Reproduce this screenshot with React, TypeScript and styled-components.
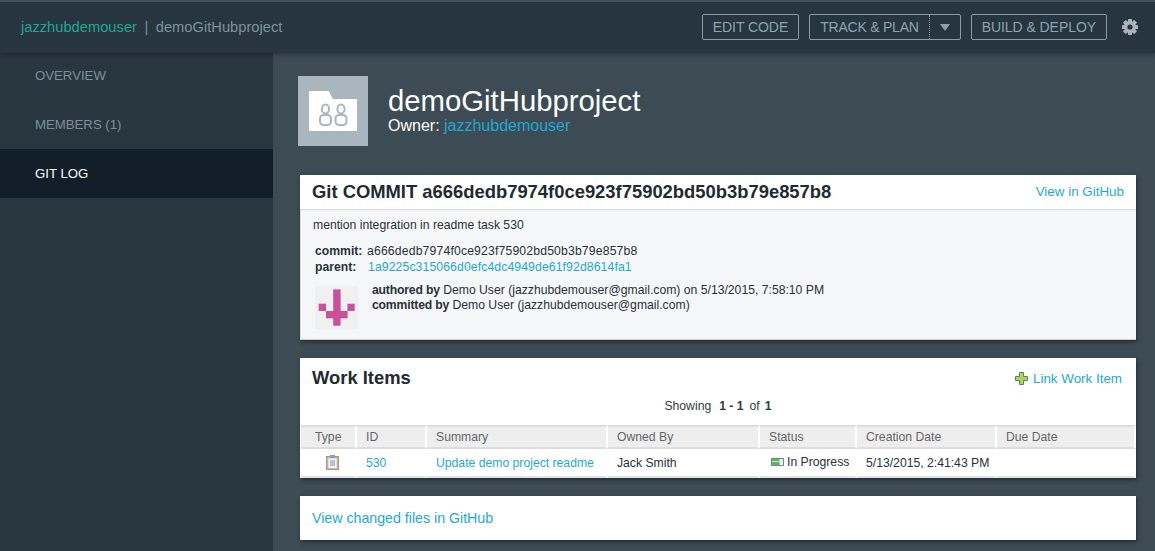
import styled, { createGlobalStyle } from "styled-components";

const GlobalStyle = createGlobalStyle`
    html, body {
        margin: 0;
        padding: 0;
        height: 100%;
        overflow: hidden;
        background: #283640;
        font-family: "Liberation Sans", Arial, sans-serif;
    }
`;

const Page = styled.div`
    display: flex;
    flex-direction: column;
    width: 1155px;
    height: 551px;
    overflow: hidden;
`;

const TopBar = styled.header`
    display: flex;
    align-items: center;
    justify-content: space-between;
    height: 53px;
    flex: none;
    box-sizing: border-box;
    padding: 0 17px 1px 21px;
    background: #263540;
    border-top: 2px solid #3f5257;
    box-shadow: 0 2px 4px rgba(0, 0, 0, 0.25);
    position: relative;
    z-index: 2;
`;

const Crumbs = styled.div`
    display: flex;
    align-items: center;
    font-size: 14.7px;
    color: #7f929c;
`;

const OwnerCrumb = styled.a`
    color: #22a596;
`;

const CrumbDivider = styled.span`
    margin: 0 7.5px;
`;

const Actions = styled.div`
    display: flex;
    align-items: center;
    gap: 10px;
`;

const OutlineButton = styled.div`
    display: flex;
    align-items: center;
    height: 26px;
    box-sizing: border-box;
    padding: 0 10px;
    border: 1px solid #8b9ba5;
    border-radius: 2px;
    font-size: 14px;
    letter-spacing: -0.06px;
    color: #8fa3ae;
`;

const SplitButton = styled.div`
    display: flex;
    align-items: stretch;
    height: 26px;
    box-sizing: border-box;
    border: 1px solid #8b9ba5;
    border-radius: 2px;
    font-size: 14px;
    letter-spacing: -0.22px;
    color: #8fa3ae;
`;

const SplitLabel = styled.span`
    display: flex;
    align-items: center;
    padding: 0 10px;
    border-right: 1px dotted #8b9ba5;
`;

const SplitCaret = styled.span`
    display: flex;
    align-items: center;
    justify-content: center;
    width: 30px;
`;

const Caret = styled.i`
    width: 0;
    height: 0;
    border-left: 5px solid transparent;
    border-right: 5px solid transparent;
    border-top: 7px solid #8f9fa8;
`;

const GearWrap = styled.span`
    display: flex;
    margin-left: 5px;
`;

const Body = styled.div`
    display: flex;
    flex: 1;
    min-height: 0;
`;

const Sidebar = styled.nav`
    width: 273px;
    flex: none;
    background: #283640;
`;

const NavList = styled.div`
    margin-top: -2px;
`;

const NavItem = styled.a<{ $active?: boolean }>`
    display: flex;
    align-items: center;
    height: 49px;
    padding-left: 35px;
    font-size: 13.2px;
    color: ${(p) => (p.$active ? "#ffffff" : "#7e8f99")};
    background: ${(p) => (p.$active ? "#121f2a" : "transparent")};
`;

const Main = styled.main`
    flex: 1;
    min-width: 0;
    box-sizing: border-box;
    padding: 23px 19px 0 25px;
    background: #3c4b54;
`;

const ProjectHead = styled.div`
    display: flex;
    align-items: center;
    gap: 20px;
    margin-bottom: 29px;
`;

const ProjectIcon = styled.div`
    display: flex;
    align-items: center;
    justify-content: center;
    width: 70px;
    height: 70px;
    background: #a9b6bd;
`;

const ProjectText = styled.div`
    padding-bottom: 2px;
`;

const ProjectTitle = styled.h1`
    margin: 0;
    font-size: 29.3px;
    font-weight: 400;
    line-height: 32px;
    color: #ffffff;
`;

const ProjectOwner = styled.div`
    font-size: 16px;
    line-height: 18px;
    color: #ffffff;
`;

const Link = styled.a`
    color: #1fa9cf;
`;

const Card = styled.section`
    margin: 0 0 18px 2px;
    width: 836px;
    background: #ffffff;
    box-shadow: 1px 2px 4px rgba(0, 0, 0, 0.4);
`;

const CommitHead = styled.div`
    display: flex;
    align-items: center;
    justify-content: space-between;
    height: 34px;
    padding: 0 12px;
    border-bottom: 1px solid #d8d8d8;
`;

const CommitTitle = styled.h2`
    margin: 0;
    font-size: 18.4px;
    font-weight: 700;
    color: #222a30;
`;

const CommitLink = styled(Link)`
    font-size: 13.4px;
    padding-bottom: 2px;
`;

const CommitBody = styled.div`
    height: 130px;
    box-sizing: border-box;
    padding: 8px 12px 0;
    background: #f5f6f8;
    font-size: 12.2px;
    color: #2a3138;
    border-left: 1px solid #dddddd;
    border-bottom: 1px solid #cccccc;
`;

const Message = styled.div`
    line-height: 14px;
    margin-bottom: 11px;
`;

const MetaRow = styled.div`
    display: flex;
    line-height: 16px;
    padding-left: 2px;
`;

const MetaLabel = styled.b`
    width: 52px;
    flex: none;
`;

const CommitHash = styled.span`
    letter-spacing: 0.17px;
`;

const ParentHash = styled(Link)`
    margin-left: 1px;
    letter-spacing: 0.12px;
`;

const Authors = styled.div`
    display: flex;
    gap: 14px;
    margin-top: 8px;
    padding-left: 2px;
    line-height: 15px;
`;

const AuthorLabel = styled.b`
    letter-spacing: -0.18px;
`;

const Avatar = styled.div`
    width: 43px;
    height: 43px;
    margin-top: 3px;
    flex: none;
`;

const WorkHead = styled.div`
    display: flex;
    align-items: center;
    justify-content: space-between;
    height: 40px;
    padding: 0 14px 0 12px;
`;

const WorkTitle = styled.h2`
    margin: 0;
    font-size: 18.4px;
    font-weight: 700;
    color: #222a30;
`;

const WorkLink = styled(Link)`
    display: flex;
    align-items: center;
    gap: 5px;
    font-size: 13.4px;
`;

const Paging = styled.div`
    display: flex;
    justify-content: center;
    gap: 5px;
    height: 27px;
    padding-top: 1px;
    box-sizing: border-box;
    font-size: 12.2px;
    color: #333a40;
`;

const PagingRange = styled.b`
    margin: 0 1px 0 3px;
`;

const Table = styled.table`
    width: 835px;
    margin-left: 1px;
    border-collapse: separate;
    border-spacing: 0;
    table-layout: fixed;
    font-size: 12.2px;
`;

const Th = styled.th<{ $inset?: boolean }>`
    height: 20px;
    padding: 0 0 0 ${(p) => (p.$inset ? "14px" : "9px")};
    background: #eeeeee;
    border-top: 2px solid #dddddd;
    border-bottom: 2px solid #dddddd;
    border-right: 2px solid #ffffff;
    font-weight: 400;
    text-align: left;
    color: #666666;
`;

const Td = styled.td`
    height: 27px;
    padding: 0 0 0 9px;
    color: #2a3138;
    border-right: 2px solid #ffffff;
    border-bottom: 2px solid #e3e3e3;
    white-space: nowrap;
`;

const IconTd = styled(Td)`
    padding: 0 0 0 8px;
    text-align: center;
`;

const StatusCell = styled.span`
    display: inline-flex;
    align-items: center;
    gap: 3px;
    margin-left: 2px;
    position: relative;
    top: -1px;
`;

const TypeIcon = styled.span`
    display: flex;
    justify-content: center;
`;

const ChangedRow = styled.div`
    display: flex;
    align-items: center;
    height: 44px;
    padding-left: 12px;
    font-size: 14.2px;
`;

const columns = [56, 70, 181, 152, 97, 140, 139];
const headers = ["Type", "ID", "Summary", "Owned By", "Status", "Creation Date", "Due Date"];

function FolderIcon() {
    return (
        <svg width="48" height="40" viewBox="0 0 48 40">
            <path d="M1 0h18q.6 0 1 .6l4 7.400h23q1 0 1 1v30q0 1-1 1H1q-1 0-1-1V1q0-1 1-1z" fill="#fff" />
            <g fill="none" stroke="#a9b6bd" strokeWidth="2">
                <ellipse cx="16.500" cy="18" rx="3.600" ry="4.600" />
                <rect x="11" y="24" width="11" height="10" rx="3.500" />
                <ellipse cx="32" cy="18" rx="3.600" ry="4.600" />
                <rect x="26.500" y="24" width="11" height="10" rx="3.500" />
            </g>
        </svg>
    );
}

function Gear() {
    return (
        <svg width="16" height="16" viewBox="0 0 16 16">
            <g fill="#a9b3ba">
                {[0, 45, 90, 135].map((a) => (
                    <rect key={a} x="6" y="0" width="4" height="16" rx="0.6" transform={`rotate(${a} 8 8)`} />
                ))}
                <circle cx="8" cy="8" r="6" />
            </g>
            <circle cx="8" cy="8" r="2.6" fill="#263540" />
        </svg>
    );
}

function Identicon() {
    return (
        <svg width="43" height="43" viewBox="0 0 43 43">
            <rect width="43" height="43" fill="#f0f0f0" />
            <g fill="#c9519c">
                <rect x="18.200" y="3.400" width="7.400" height="36.300" />
                <rect x="11" y="25" width="21.600" height="7.300" />
                <rect x="3.700" y="17.700" width="7.300" height="7.300" />
                <rect x="32.400" y="17.700" width="7.300" height="7.300" />
            </g>
        </svg>
    );
}

function PlusIcon() {
    return (
        <svg width="13" height="13" viewBox="0 0 13 13">
            <path d="M4.500.5h4v4h4v4h-4v4h-4v-4h-4v-4h4z" fill="#b4cf62" stroke="#4f8a55" />
        </svg>
    );
}

function ClipboardIcon() {
    return (
        <svg width="13" height="15" viewBox="0 0 13 15">
            <rect x="0.500" y="1.500" width="12" height="13" fill="#d3b48c" stroke="#b4946b" />
            <rect x="2" y="3" width="9" height="10.500" fill="#f0f3f9" stroke="#a9b6d2" strokeWidth="0.600" />
            <rect x="4" y="0" width="5" height="3" fill="#8f9db8" />
            <path d="M4 6h5M4 8h5M4 10h5" stroke="#7f90b5" />
        </svg>
    );
}

function ProgressIcon() {
    return (
        <svg width="13" height="8" viewBox="0 0 13 8">
            <rect x="0.500" y="0.500" width="12" height="7" fill="#e4f2f8" stroke="#6f8f7a" />
            <rect x="1" y="1" width="7.500" height="6" fill="#63b063" />
            <path d="M1 3.500h7.500" stroke="#c7ecc7" />
        </svg>
    );
}

export default function App() {
    return (
        <Page>
            <GlobalStyle />
            <TopBar>
                <Crumbs>
                    <OwnerCrumb>jazzhubdemouser</OwnerCrumb>
                    <CrumbDivider>|</CrumbDivider>
                    <span>demoGitHubproject</span>
                </Crumbs>
                <Actions>
                    <OutlineButton>EDIT CODE</OutlineButton>
                    <SplitButton>
                        <SplitLabel>TRACK &amp; PLAN</SplitLabel>
                        <SplitCaret><Caret /></SplitCaret>
                    </SplitButton>
                    <OutlineButton>BUILD &amp; DEPLOY</OutlineButton>
                    <GearWrap><Gear /></GearWrap>
                </Actions>
            </TopBar>
            <Body>
                <Sidebar>
                    <NavList>
                        <NavItem>OVERVIEW</NavItem>
                        <NavItem>MEMBERS (1)</NavItem>
                        <NavItem $active>GIT LOG</NavItem>
                    </NavList>
                </Sidebar>
                <Main>
                    <ProjectHead>
                        <ProjectIcon><FolderIcon /></ProjectIcon>
                        <ProjectText>
                            <ProjectTitle>demoGitHubproject</ProjectTitle>
                            <ProjectOwner>Owner: <Link>jazzhubdemouser</Link></ProjectOwner>
                        </ProjectText>
                    </ProjectHead>

                    <Card>
                        <CommitHead>
                            <CommitTitle>Git COMMIT a666dedb7974f0ce923f75902bd50b3b79e857b8</CommitTitle>
                            <CommitLink>View in GitHub</CommitLink>
                        </CommitHead>
                        <CommitBody>
                            <Message>mention integration in readme task 530</Message>
                            <MetaRow><MetaLabel>commit:</MetaLabel><CommitHash>a666dedb7974f0ce923f75902bd50b3b79e857b8</CommitHash></MetaRow>
                            <MetaRow><MetaLabel>parent:</MetaLabel><ParentHash>1a9225c315066d0efc4dc4949de61f92d8614fa1</ParentHash></MetaRow>
                            <Authors>
                                <Avatar><Identicon /></Avatar>
                                <div>
                                    <div><AuthorLabel>authored by</AuthorLabel> Demo User (jazzhubdemouser@gmail.com) on 5/13/2015, 7:58:10 PM</div>
                                    <div><AuthorLabel>committed by</AuthorLabel> Demo User (jazzhubdemouser@gmail.com)</div>
                                </div>
                            </Authors>
                        </CommitBody>
                    </Card>

                    <Card>
                        <WorkHead>
                            <WorkTitle>Work Items</WorkTitle>
                            <WorkLink><PlusIcon />Link Work Item</WorkLink>
                        </WorkHead>
                        <Paging>
                            <span>Showing</span>
                            <PagingRange>1 - 1</PagingRange>
                            <span>of</span>
                            <b>1</b>
                        </Paging>
                        <Table>
                            <colgroup>
                                {columns.map((w, i) => <col key={i} width={w} />)}
                            </colgroup>
                            <thead>
                                <tr>{headers.map((h, i) => <Th key={h} $inset={i === 0}>{h}</Th>)}</tr>
                            </thead>
                            <tbody>
                                <tr>
                                    <IconTd><TypeIcon><ClipboardIcon /></TypeIcon></IconTd>
                                    <Td><Link>530</Link></Td>
                                    <Td><Link>Update demo project readme</Link></Td>
                                    <Td>Jack Smith</Td>
                                    <Td><StatusCell><ProgressIcon />In Progress</StatusCell></Td>
                                    <Td>5/13/2015, 2:41:43 PM</Td>
                                    <Td />
                                </tr>
                            </tbody>
                        </Table>
                    </Card>

                    <Card>
                        <ChangedRow><Link>View changed files in GitHub</Link></ChangedRow>
                    </Card>
                </Main>
            </Body>
        </Page>
    );
}
